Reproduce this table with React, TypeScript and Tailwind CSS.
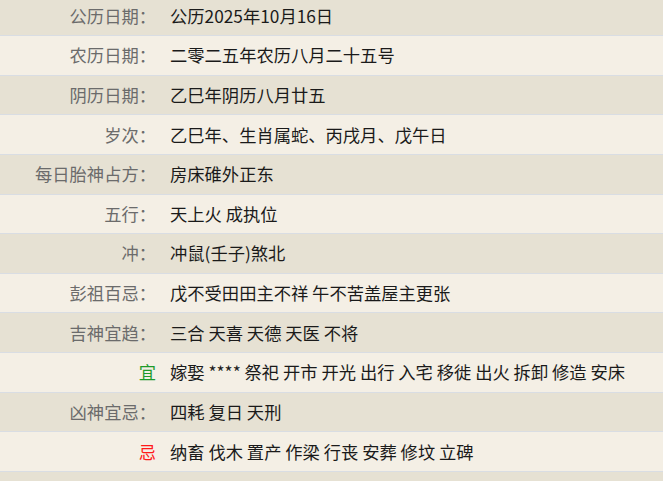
import React from 'react';

interface Row {
  label: string;
  value: string;
  tone?: 'good' | 'bad';
}

const rows: Row[] = [
  { label: '公历日期：', value: '公历2025年10月16日' },
  { label: '农历日期：', value: '二零二五年农历八月二十五号' },
  { label: '阴历日期：', value: '乙巳年阴历八月廿五' },
  { label: '岁次：', value: '乙巳年、生肖属蛇、丙戌月、戊午日' },
  { label: '每日胎神占方：', value: '房床碓外正东' },
  { label: '五行：', value: '天上火 成执位' },
  { label: '冲：', value: '冲鼠(壬子)煞北' },
  { label: '彭祖百忌：', value: '戊不受田田主不祥 午不苦盖屋主更张' },
  { label: '吉神宜趋：', value: '三合 天喜 天德 天医 不将' },
  { label: '宜', value: '嫁娶 **** 祭祀 开市 开光 出行 入宅 移徙 出火 拆卸 修造 安床', tone: 'good' },
  { label: '凶神宜忌：', value: '四耗 复日 天刑' },
  { label: '忌', value: '纳畜 伐木 置产 作梁 行丧 安葬 修坟 立碑', tone: 'bad' },
  { label: '', value: '' },
];

export default function App() {
  return (
    <div
      className="w-[663px] h-[481px] overflow-hidden bg-[#f4efe5]"
      style={{ fontFamily: '"Noto Sans CJK SC", "Noto Sans", sans-serif' }}
    >
      <div className="-mt-[3.64px]">
        {rows.map((r, i) => {
          const labelColor =
            r.tone === 'good' ? 'text-[#1e9a2a]' : r.tone === 'bad' ? 'text-[#ff1a1a]' : 'text-[#6b6b6b]';
          return (
            <div
              key={i}
              className={`flex items-center h-[39.64px] border-b border-[#d9dde3] text-[17.3px] ${
                i % 2 === 0 ? 'bg-[#e6e1d3]' : 'bg-[#f4efe5]'
              }`}
            >
              <div className={`w-[156px] shrink-0 text-right ${labelColor}`}>{r.label}</div>
              <div className="pl-[14px] text-[#1a1a1a] whitespace-nowrap">{r.value}</div>
            </div>
          );
        })}
      </div>
    </div>
  );
}
